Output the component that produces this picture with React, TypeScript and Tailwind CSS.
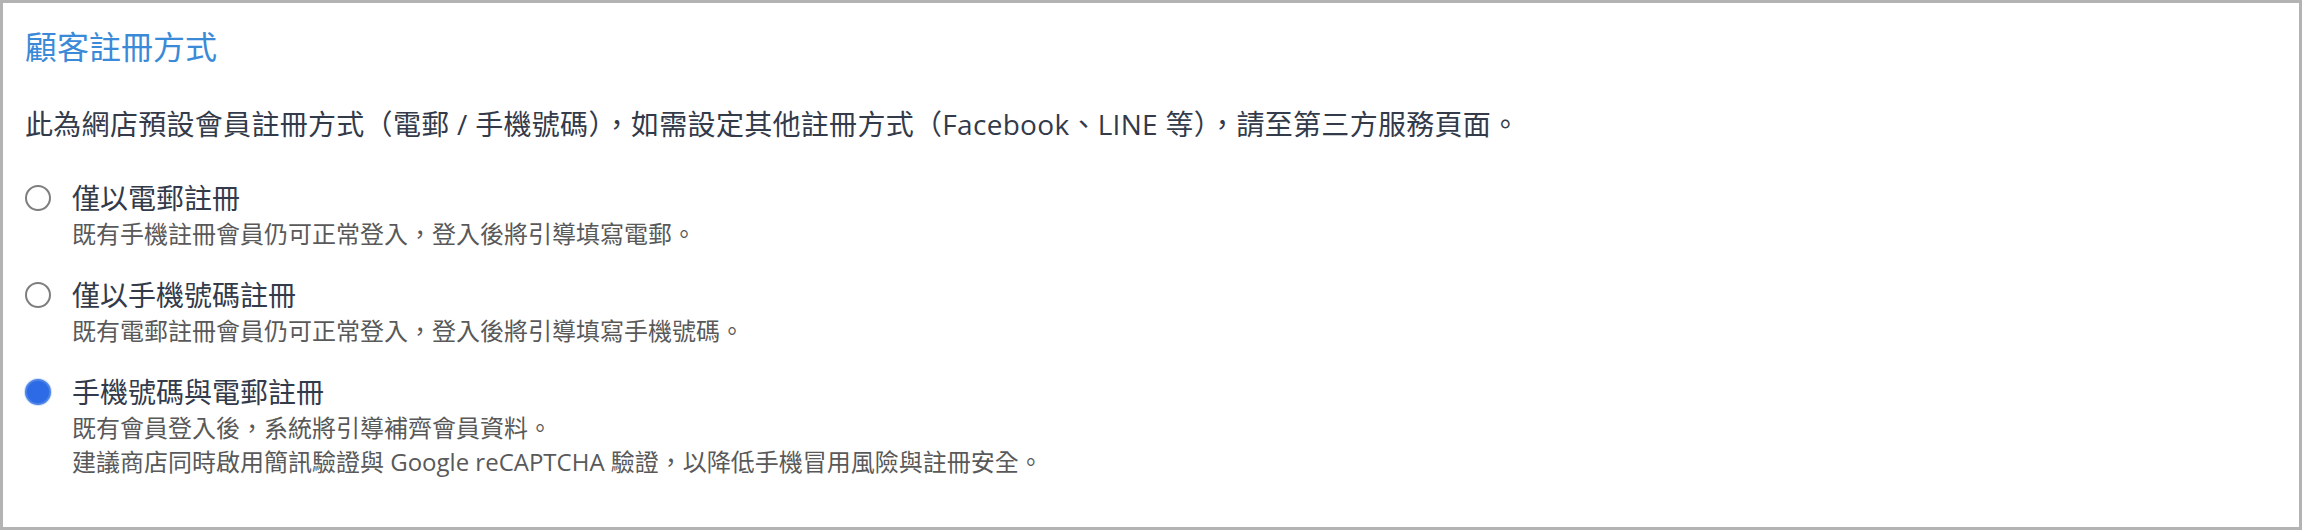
import React, { useState } from "react";

interface RegisterOption {
  id: string;
  label: string;
  notes: string[];
}

const options: RegisterOption[] = [
  {
    id: "email",
    label: "僅以電郵註冊",
    notes: ["既有手機註冊會員仍可正常登入，登入後將引導填寫電郵。"],
  },
  {
    id: "mobile",
    label: "僅以手機號碼註冊",
    notes: ["既有電郵註冊會員仍可正常登入，登入後將引導填寫手機號碼。"],
  },
  {
    id: "both",
    label: "手機號碼與電郵註冊",
    notes: [
      "既有會員登入後，系統將引導補齊會員資料。",
      "建議商店同時啟用簡訊驗證與 Google reCAPTCHA 驗證，以降低手機冒用風險與註冊安全。",
    ],
  },
];

export default function App() {
  const [selected, setSelected] = useState("both");

  return (
    <div className="h-[530px] w-full bg-white border-[3px] border-[#b3b3b3] px-[22px] pt-[21px] font-['Open_Sans','Noto_Sans_CJK_TC',sans-serif]">
      {/* Header */}
      <h2 className="text-[32px] leading-[46px] text-[#3b8ad8]">顧客註冊方式</h2>

      <p className="mt-[34px] text-[28px] leading-[40px] tracking-[0.3px] text-[#333a4a]">
        此為網店預設會員註冊方式（電郵 / 手機號碼），如需設定其他註冊方式（Facebook、LINE 等），請至第三方服務頁面。
      </p>

      {/* Options */}
      <div className="mt-[35px] flex flex-col gap-[25px]">
        {options.map((option) => {
          const checked = selected === option.id;
          return (
            <label key={option.id} className="flex cursor-pointer items-start gap-[21px]">
              <input
                type="radio"
                name="register-method"
                className="sr-only"
                checked={checked}
                onChange={() => setSelected(option.id)}
              />
              <span className="flex h-[38px] w-[26px] shrink-0 items-center justify-center">
                {checked ? (
                  <span className="h-[26px] w-[26px] rounded-full border-2 border-[#4a82e6] bg-[#2c6ae6] ring-1 ring-[#d3e2fb]" />
                ) : (
                  <span className="h-[26px] w-[26px] rounded-full border-2 border-[#7e7e7e] bg-white" />
                )}
              </span>
              <div>
                <div className="text-[28px] leading-[38px] text-[#333a4a]">{option.label}</div>
                {option.notes.map((note) => (
                  <p key={note} className="text-[24px] leading-[34px] text-[#595959]">
                    {note}
                  </p>
                ))}
              </div>
            </label>
          );
        })}
      </div>
    </div>
  );
}
